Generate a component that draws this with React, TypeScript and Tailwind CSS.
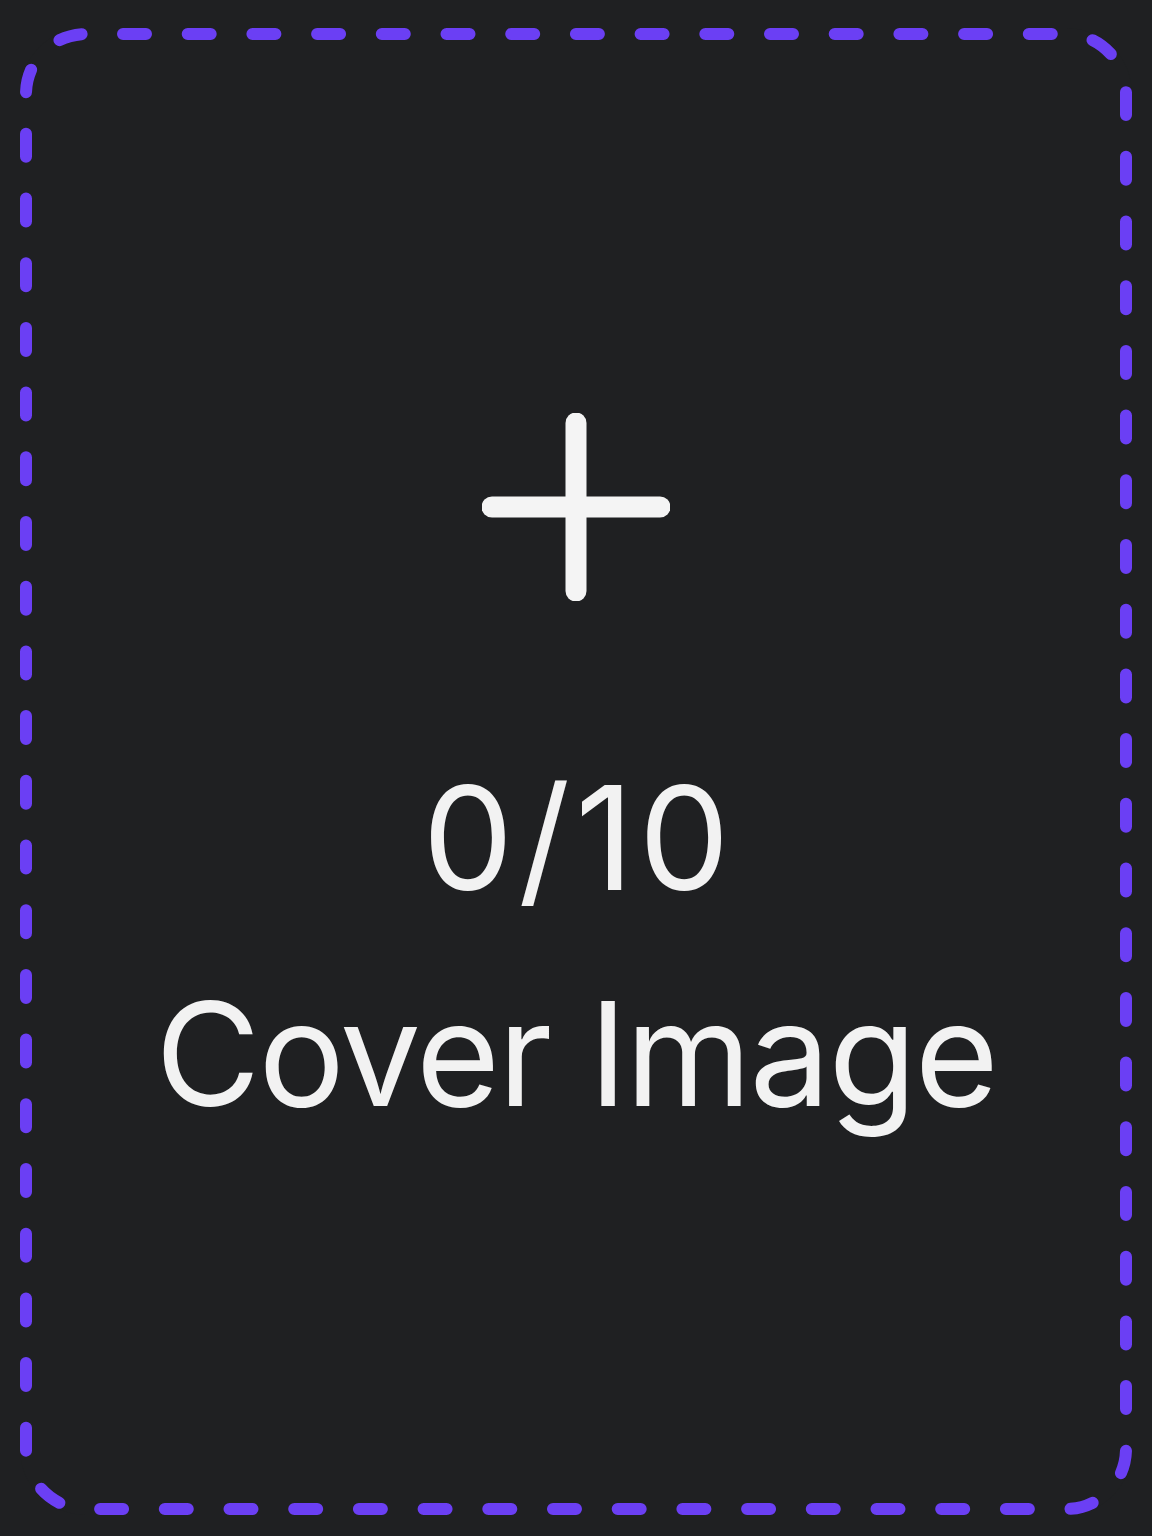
export default function App() {
  return (
    <div className="min-h-screen w-full bg-[#1f2022] pt-[28px] pb-[21px] px-[20px] font-['Inter','Noto_Sans',sans-serif]">
      <div className="relative h-[1487px] w-full rounded-[66px] bg-[#1f2022] flex flex-col items-center justify-center pt-[31px]">
        {/* dashed outline with round caps */}
        <svg className="pointer-events-none absolute inset-0" width="1112" height="1487" viewBox="0 0 1112 1487" fill="none">
          <rect
            x="6"
            y="6"
            width="1100"
            height="1475"
            rx="60"
            stroke="#6b3ff4"
            strokeWidth="12"
            strokeLinecap="round"
            strokeDasharray="23 41.7"
            strokeDashoffset="27.7"
          />
        </svg>
        <svg width="188" height="188" viewBox="0 0 188 188" fill="none" className="shrink-0">
          <line x1="94" y1="10" x2="94" y2="178" stroke="#f4f4f4" strokeWidth="21" strokeLinecap="round" />
          <line x1="10" y1="94" x2="178" y2="94" stroke="#f4f4f4" strokeWidth="21" strokeLinecap="round" />
        </svg>
        <div className="mt-[129px] text-center text-[144px] leading-[1.5] text-[#f2f2f2]">
          <p className="tracking-[5px] pl-[5px]">0/10</p>
          <p className="tracking-[-2px]">Cover Image</p>
        </div>
      </div>
    </div>
  );
}
